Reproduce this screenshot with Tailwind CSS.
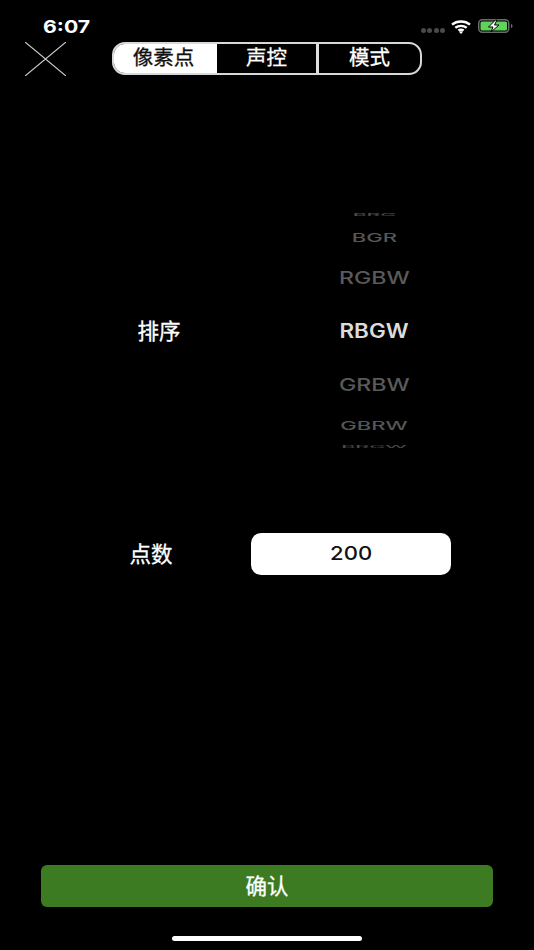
<!DOCTYPE html>
<html lang="zh">
<head>
  <meta charset="UTF-8" />
  <title>像素点</title>
  <script src="https://cdn.jsdelivr.net/npm/@tailwindcss/browser@4"></script>
</head>
<body class="bg-black">
  <div class="relative w-[534px] h-[950px] bg-black text-white overflow-hidden flex flex-col font-['Inter','Noto_Sans_CJK_SC',sans-serif]">

    <!-- status bar -->
    <div class="h-[42px] pl-[43px] pr-[21px] flex justify-between">
      <span class="mt-[16px] h-[22px] leading-[22px] text-[18px] font-bold origin-left scale-x-[1.18]">6:07</span>
      <div class="mt-[17px] flex items-start">
        <div class="mt-[11px] flex gap-[1.5px]">
          <span class="w-[5px] h-[5px] rounded-full bg-[#4a4a4a]"></span>
          <span class="w-[5px] h-[5px] rounded-full bg-[#4a4a4a]"></span>
          <span class="w-[5px] h-[5px] rounded-full bg-[#4a4a4a]"></span>
          <span class="w-[5px] h-[5px] rounded-full bg-[#4a4a4a]"></span>
        </div>
        <svg class="ml-[6px] mt-[3px]" width="20" height="14" viewBox="0 0 20 14" fill="none" stroke="#fff" stroke-width="2.4">
          <path d="M1 4.6 C6 .4 14 .4 19 4.6" />
          <path d="M4.3 7.8 C7.6 5.2 12.4 5.2 15.7 7.8" />
          <path d="M7.4 10.6 C9 9.5 11 9.5 12.6 10.6" />
          <path d="M10 14 L7.9 11.8 C9.2 10.9 10.8 10.9 12.1 11.8 Z" fill="#fff" stroke="none" />
        </svg>
        <svg class="ml-[7px] mt-[2px]" width="35" height="14" viewBox="0 0 35 14" fill="none">
          <rect x="0.75" y="0.75" width="30" height="12.5" rx="3.5" stroke="#6b6b6b" stroke-width="1.5" />
          <rect x="2.5" y="2.5" width="26.5" height="9" rx="1.5" fill="#5fd35c" />
          <path d="M33 5 C34 5.4 34.5 6 34.5 7 C34.5 8 34 8.6 33 9 Z" fill="#6b6b6b" />
          <path d="M17.5 1 L10.5 8 H15 L13 13 L21 6 H16.5 L19 1 Z" fill="#fff" stroke="#000" stroke-width="1" />
        </svg>
      </div>
    </div>

    <!-- header -->
    <div class="relative h-[34px] flex items-center">
      <svg class="absolute left-[25px] top-0" width="41" height="34" viewBox="0 0 41 34" stroke="#c8c8c8" stroke-width="1.2">
        <path d="M0 0 L41 34 M41 0 L0 34" />
      </svg>
      <div class="ml-[112px] mb-[2px] w-[310px] h-[33px] flex rounded-[13px] border-2 border-[#d8d8d8] overflow-hidden text-[20.5px] [-webkit-text-stroke:0.3px]">
        <div class="w-[103px] pr-[4px] bg-white text-[#111] flex items-center justify-center">像素点</div>
        <div class="w-[102px] border-r-[3px] border-[#e0e0e0] flex items-center justify-center">声控</div>
        <div class="flex-1 flex items-center justify-center">模式</div>
      </div>
    </div>

    <!-- order picker -->
    <div class="flex mt-[135px] h-[245px]">
      <div class="w-[318px] pt-[106px] h-[245px]">
        <div class="text-center text-[21.5px] leading-[28px] [-webkit-text-stroke:0.3px]">排序</div>
      </div>
      <div class="w-[112px] flex flex-col items-center font-medium text-[#5a5a5a]">
        <div class="h-[8px] leading-[8px] text-[17px] scale-x-[1.25] scale-y-[0.24] text-[#4a4a4a]">BRG</div>
        <div class="mt-[11px] h-[16px] leading-[16px] text-[17px] scale-x-[1.3] scale-y-[0.68] text-[#565656]">BGR</div>
        <div class="mt-[20px] h-[24px] leading-[24px] text-[18.5px] scale-x-[1.25] scale-y-[0.92]">RGBW</div>
        <div class="mt-[29px] h-[24px] leading-[24px] text-[19.5px] scale-x-[1.15] text-[#dcdcdc] font-semibold">RBGW</div>
        <div class="mt-[30px] h-[24px] leading-[24px] text-[18.5px] scale-x-[1.25] scale-y-[0.92]">GRBW</div>
        <div class="mt-[21px] h-[16px] leading-[16px] text-[17px] scale-x-[1.3] scale-y-[0.68] text-[#565656]">GBRW</div>
        <div class="mt-[9px] h-[8px] leading-[8px] text-[17px] scale-x-[1.26] scale-y-[0.2] text-[#4a4a4a]">BRGW</div>
      </div>
    </div>

    <!-- led count -->
    <div class="flex items-center mt-[77px] h-[42px]">
      <div class="w-[251px]">
        <div class="w-[302px] text-center text-[21.5px] [-webkit-text-stroke:0.3px]">点数</div>
      </div>
      <div class="w-[200px] h-[42px] rounded-[10px] bg-white text-[#111] flex items-center justify-center text-[19px] font-medium">
        <span class="scale-x-[1.16]">200</span>
      </div>
    </div>

    <!-- confirm -->
    <button class="mt-[290px] mx-[41px] h-[42px] rounded-[6px] bg-[#3d7b22] text-white text-[21.5px] [-webkit-text-stroke:0.3px] flex items-center justify-center">确认</button>

    <!-- home indicator -->
    <div class="mt-[29px] mx-auto w-[190px] h-[5px] rounded-full bg-white"></div>
  </div>
</body>
</html>
